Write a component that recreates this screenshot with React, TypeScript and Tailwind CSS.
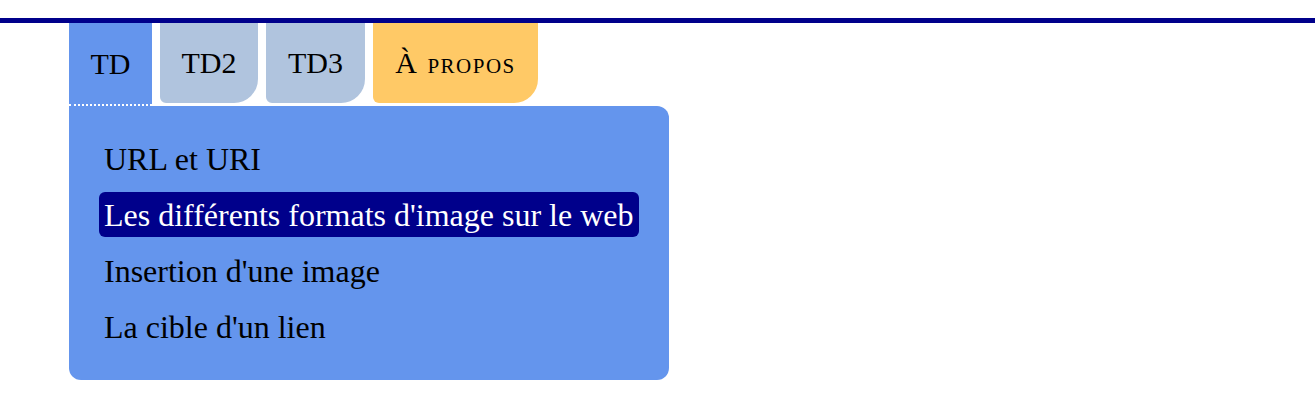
import React from "react";

export default function App() {
  const items = [
    { label: "URL et URI", active: false },
    { label: "Les différents formats d'image sur le web", active: true },
    { label: "Insertion d'une image", active: false },
    { label: "La cible d'un lien", active: false },
  ];
  return (
    <div
      className="w-[1315px] h-[400px] bg-white text-black"
      style={{ fontFamily: '"Liberation Serif", "Times New Roman", serif' }}
    >
      <div className="h-[18px]" />
      <div className="h-[5px] bg-[#00008b]" />
      <div className="pl-[69px]">
        <div className="flex items-start gap-[8px]">
          <div className="w-[83px] h-[83px] flex items-center justify-center bg-[#6495ed] border-b-2 border-dotted border-white text-[30px] leading-none">
            TD
          </div>
          <div className="w-[98px] h-[80px] flex items-center justify-center bg-[#b0c4de] rounded-bl-[6px] rounded-br-[24px] text-[30px] leading-none">
            TD2
          </div>
          <div className="w-[99px] h-[80px] flex items-center justify-center bg-[#b0c4de] rounded-bl-[6px] rounded-br-[24px] text-[30px] leading-none">
            TD3
          </div>
          <div className="w-[165px] h-[80px] flex items-center justify-center bg-[#ffc966] rounded-bl-[6px] rounded-br-[24px] text-[30px] leading-none tracking-[1.5px] [font-variant:small-caps]">
            À propos
          </div>
        </div>
        <div className="w-[600px] bg-[#6495ed] rounded-tr-[12px] rounded-b-[12px] pt-[30px] pb-[31px] px-[30px] flex flex-col gap-[11px]">
          {items.map((it) => (
            <div
              key={it.label}
              className={
                it.active
                  ? "h-[45px] px-[5px] flex items-center rounded-[6px] bg-[#00008b] text-white text-[32px] whitespace-nowrap"
                  : "h-[45px] px-[5px] flex items-center text-[32px] whitespace-nowrap"
              }
            >
              {it.label}
            </div>
          ))}
        </div>
      </div>
    </div>
  );
}
